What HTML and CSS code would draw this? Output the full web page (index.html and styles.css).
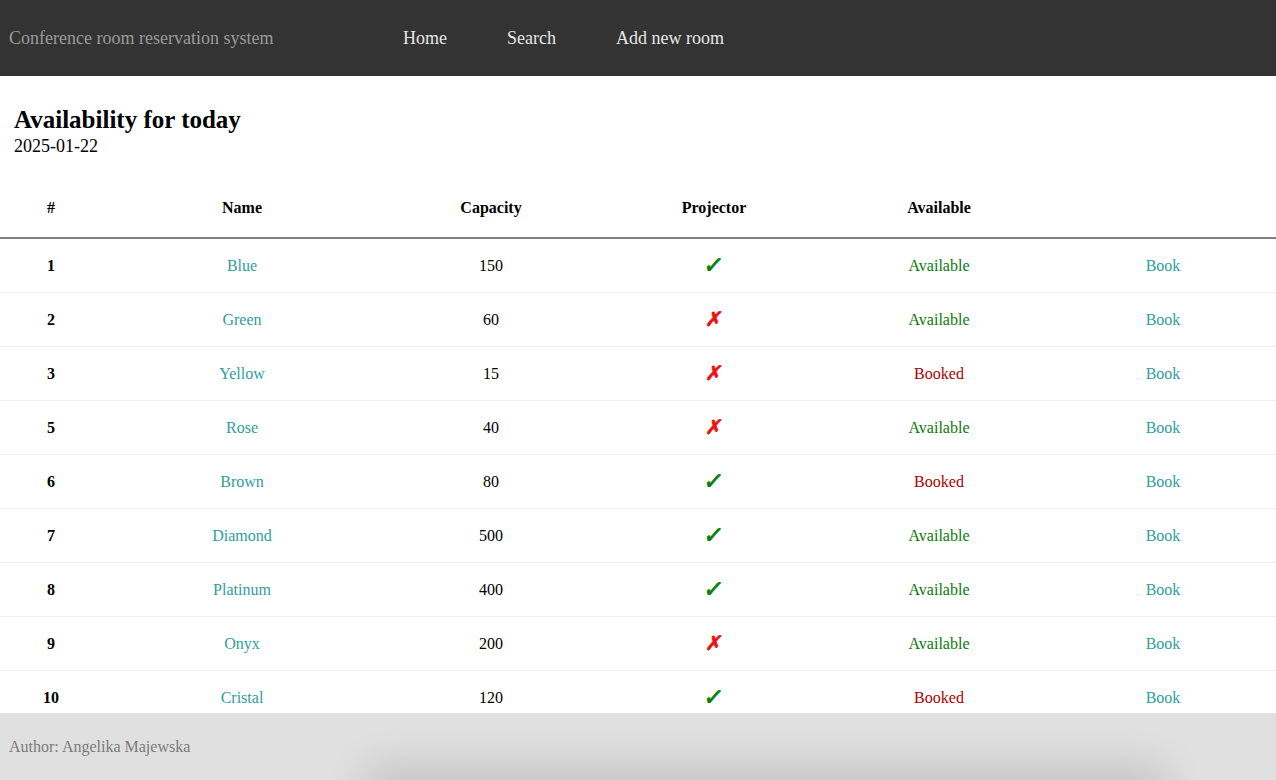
FILE: index.html
```html
<!DOCTYPE html>
<html lang="en">
<head>
<meta charset="utf-8">
<title>Conference room reservation system</title>
<link rel="stylesheet" href="styles.css">
</head>
<body>
<nav class="navbar">
  <a class="brand" href="#">Conference room reservation system</a>
  <ul class="nav-links">
    <li><a href="#">Home</a></li>
    <li><a href="#">Search</a></li>
    <li><a href="#">Add new room</a></li>
  </ul>
</nav>
<main class="content">
  <div class="intro">
    <h1 class="title">Availability for today</h1>
    <div class="date">2025-01-22</div>
  </div>
  <table class="rooms">
    <colgroup>
      <col class="c1"><col class="c2"><col class="c3"><col class="c4"><col class="c5"><col class="c6">
    </colgroup>
    <thead>
      <tr><th>#</th><th>Name</th><th>Capacity</th><th>Projector</th><th>Available</th><th></th></tr>
    </thead>
    <tbody>
      <tr><th>1</th><td><a href="#">Blue</a></td><td>150</td><td><span class="yes">✓</span></td><td class="ok">Available</td><td><a href="#">Book</a></td></tr>
      <tr><th>2</th><td><a href="#">Green</a></td><td>60</td><td><span class="no">✗</span></td><td class="ok">Available</td><td><a href="#">Book</a></td></tr>
      <tr><th>3</th><td><a href="#">Yellow</a></td><td>15</td><td><span class="no">✗</span></td><td class="busy">Booked</td><td><a href="#">Book</a></td></tr>
      <tr><th>5</th><td><a href="#">Rose</a></td><td>40</td><td><span class="no">✗</span></td><td class="ok">Available</td><td><a href="#">Book</a></td></tr>
      <tr><th>6</th><td><a href="#">Brown</a></td><td>80</td><td><span class="yes">✓</span></td><td class="busy">Booked</td><td><a href="#">Book</a></td></tr>
      <tr><th>7</th><td><a href="#">Diamond</a></td><td>500</td><td><span class="yes">✓</span></td><td class="ok">Available</td><td><a href="#">Book</a></td></tr>
      <tr><th>8</th><td><a href="#">Platinum</a></td><td>400</td><td><span class="yes">✓</span></td><td class="ok">Available</td><td><a href="#">Book</a></td></tr>
      <tr><th>9</th><td><a href="#">Onyx</a></td><td>200</td><td><span class="no">✗</span></td><td class="ok">Available</td><td><a href="#">Book</a></td></tr>
      <tr><th>10</th><td><a href="#">Cristal</a></td><td>120</td><td><span class="yes">✓</span></td><td class="busy">Booked</td><td><a href="#">Book</a></td></tr>
    </tbody>
  </table>
</main>
<footer class="footer">Author: Angelika Majewska</footer>
</body>
</html>
```
FILE: styles.css
```css
html, body {
  margin: 0;
  padding: 0;
}
body {
  font-family: "Liberation Serif", "Times New Roman", serif;
  font-size: 16px;
  color: #000;
  background: #fff;
}
a {
  text-decoration: none;
}
.navbar {
  height: 76px;
  background: #333333;
  display: flex;
  align-items: center;
  padding: 0 9px;
  box-sizing: border-box;
}
.brand {
  color: #9a9a9a;
  font-size: 18px;
  width: 394px;
}
.nav-links {
  list-style: none;
  margin: 0;
  padding: 0;
  display: flex;
}
.nav-links li {
  margin-right: 60px;
}
.nav-links a {
  color: #e6e6e6;
  font-size: 18px;
}
.content {
  padding-bottom: 80px;
}
.intro {
  padding: 29px 14px 0;
}
.title {
  margin: 0;
  font-size: 25px;
  font-weight: bold;
  line-height: 30px;
}
.date {
  font-size: 18px;
  line-height: 22px;
}
.rooms {
  width: 100%;
  border-collapse: collapse;
  margin-top: 22px;
  table-layout: fixed;
}
.c1 { width: 102px; }
.c2 { width: 280px; }
.c3 { width: 218px; }
.c4 { width: 228px; }
.c5 { width: 222px; }
.c6 { width: 226px; }
.rooms th, .rooms td {
  text-align: center;
  padding: 0;
  height: 53px;
  border-bottom: 1px solid #efefef;
}
.rooms thead th {
  height: 58px;
  border-bottom: 2px solid #808080;
}
.rooms a {
  color: #2f9d9d;
}
.yes, .no {
  font-family: "DejaVu Sans", sans-serif;
  font-weight: bold;
  font-size: 23px;
  line-height: 20px;
  display: inline-block;
  transform: skewX(-8deg);
  -webkit-text-stroke: 0.9px currentColor;
}
.yes { color: #0a800a; }
.no { color: #ee1111; font-size: 20px; }
.ok { color: #0a7a0a; }
.busy { color: #aa0000; }
.footer {
  position: fixed;
  left: 0;
  right: 0;
  bottom: 0;
  height: 67px;
  box-sizing: border-box;
  padding: 0 9px;
  display: flex;
  align-items: center;
  color: #7a7a7a;
  background: #e0e0e0;
  overflow: hidden;
}
.footer::after {
  content: "";
  position: absolute;
  left: 380px;
  width: 770px;
  top: 100%;
  height: 20px;
  box-shadow: 0 0 40px 14px rgba(0, 0, 0, 0.13);
  background: #000;
}
```
